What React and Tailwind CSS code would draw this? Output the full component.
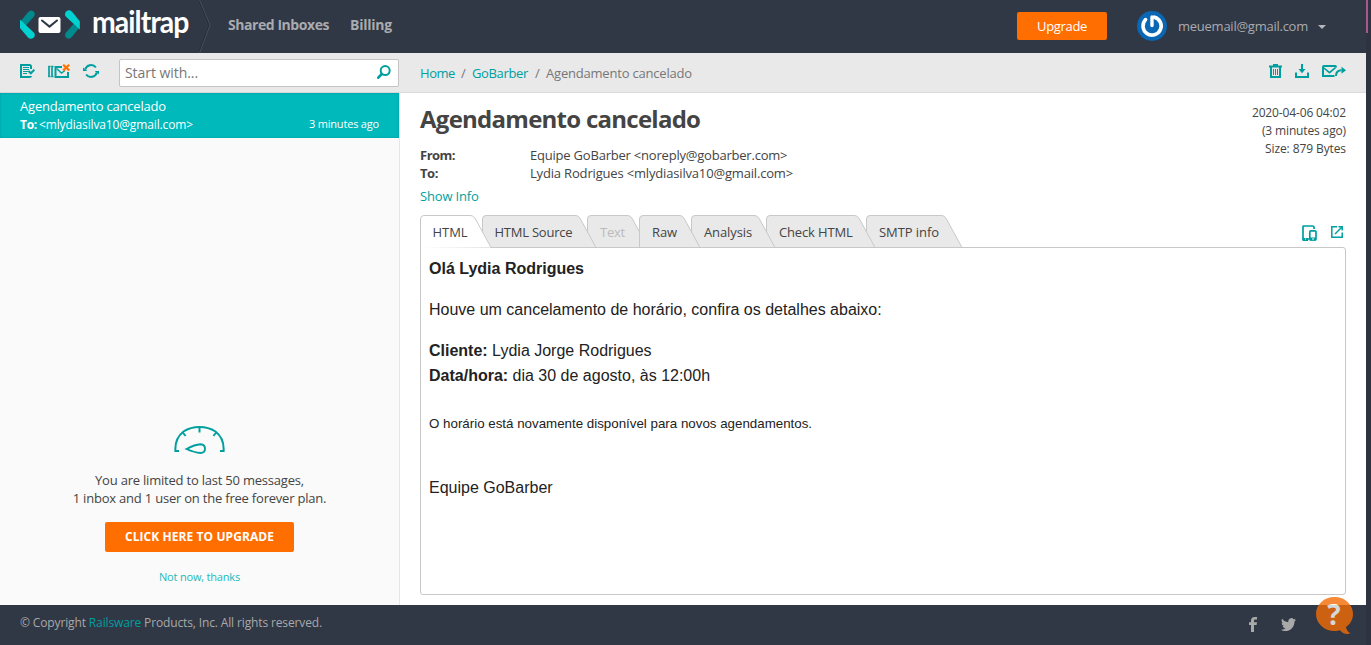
import React from "react";

/* ---------- logo ---------- */

function LogoMark() {
  const bracket = (
    <>
      <path d="M20.5 21.5 L28 12.2 Q30.2 9.6 33 11 Q36 13.200 34 16.500 L25.500 26 Z" fill="#008a8d" />
      <path d="M20 19.600 L33.800 32.500 Q36 35.200 33.600 37.800 Q30.800 40 28 37.600 L20 28 Z" fill="#00d2d2" />
    </>
  );
  return (
    <svg className="h-[53px] w-[92px] shrink-0" viewBox="0 0 92 53">
      <path d="M20.500 21.500 L28 12.200 Q30.200 9.600 33 11 Q36 13.200 34 16.500 L25.500 26 Z" fill="#008a8d" />
      <path d="M20 19.600 L33.800 32.500 Q36 35.200 33.600 37.800 Q30.800 40 28 37.600 L20 28 Z" fill="#00d2d2" />
      <g transform="rotate(180 49.900 24.600)">{bracket}</g>
      <rect x="38.500" y="17" width="22" height="16" rx="2" fill="#fff" />
      <path d="M42 20.500 L49.500 26.600 L57 20.500" fill="none" stroke="#303745" strokeWidth="2" strokeLinecap="round" strokeLinejoin="round" />
    </svg>
  );
}

function Gravatar() {
  return (
    <svg className="size-[30px]" viewBox="0 0 30 30">
      <circle cx="15" cy="15" r="15" fill="#0a67b3" />
      <path d="M15 6 V14.500" stroke="#fff" strokeWidth="3.400" strokeLinecap="round" />
      <path d="M17.500 6.200 A9.100 9.100 0 1 1 8.600 8.600" fill="none" stroke="#fff" strokeWidth="3.600" strokeLinecap="round" />
    </svg>
  );
}

/* ---------- toolbar icons ---------- */

function MarkReadIcon() {
  return (
    <svg className="h-[14px] w-[15px]" viewBox="0 0 15 14" fill="none" stroke="#009f9f">
      <path d="M11 5 V2.500 Q11 1 9.500 1 H1 V13 H9.500 Q11 13 11 12" strokeWidth="2" />
      <path d="M3 3.500 H9 M3 5.500 H9 M3 7.500 H8 M3 9.500 H7" strokeWidth="1" />
      <path d="M8.500 7 L10.800 9.300 L14.400 5.700" strokeWidth="2" />
    </svg>
  );
}

function ClearInboxIcon() {
  return (
    <svg className="h-[14px] w-[22px]" viewBox="0 0 22 14" fill="none">
      <g stroke="#009f9f">
        <path d="M2.500 2.500 H1 V12.500 H2.500 M5.500 2.500 H4 V12.500 H5.500" strokeWidth="1.700" />
        <path d="M14 3 H7.500 V13 H20 V8" strokeWidth="2" />
        <path d="M8.500 4.500 L13.500 9 L17 6.500" strokeWidth="1.400" />
      </g>
      <path d="M15.200 0.800 L21.200 6.400 M21.200 0.800 L15.200 6.400" stroke="#ff7200" strokeWidth="2.200" />
    </svg>
  );
}

function RefreshIcon() {
  return (
    <svg className="h-[14px] w-4" viewBox="0 0 16 14" fill="none">
      <path d="M2.200 5.500 A6 5.800 0 0 1 12.900 3.500 M13.800 8.500 A6 5.800 0 0 1 3.100 10.500" stroke="#009f9f" strokeWidth="2" />
      <path d="M0 3.400 V7 H4.400 Z M16 10.600 V7 H11.600 Z" fill="#009f9f" />
    </svg>
  );
}

function SearchIcon() {
  return (
    <svg className="h-[14px] w-[14px]" viewBox="0 0 14 14" fill="none" stroke="#009f9f">
      <circle cx="8.200" cy="5.600" r="4.500" strokeWidth="2" />
      <path d="M4.800 9 L1.300 12.700" strokeWidth="2.600" strokeLinecap="round" />
    </svg>
  );
}

function TrashIcon() {
  return (
    <svg className="h-[14px] w-[13px]" viewBox="0 0 13 14" fill="none" stroke="#009f9f">
      <path d="M0 2.500 H13" strokeWidth="2" />
      <path d="M4 1 H9" strokeWidth="2" />
      <path d="M2 3 V13 H11 V3" strokeWidth="2" />
      <path d="M4.500 5 V11 M6.500 5 V11 M8.500 5 V11" strokeWidth="1" />
    </svg>
  );
}

function DownloadIcon() {
  return (
    <svg className="h-[14px] w-[14px]" viewBox="0 0 14 14">
      <path d="M1 8.500 V13 H13 V8.500" fill="none" stroke="#009f9f" strokeWidth="2" />
      <path d="M6 0 H8 V5 H10.500 L7 9.200 L3.500 5 H6 Z" fill="#009f9f" />
    </svg>
  );
}

function ForwardIcon() {
  return (
    <svg className="h-[14px] w-6" viewBox="0 0 24 14" fill="none" stroke="#009f9f">
      <path d="M14 3.500 V3 Q14 2 13 2 H2 Q1 2 1 3 V12 H12.500" strokeWidth="2" />
      <path d="M2 4 L7.500 8.600 L13.500 3.600" strokeWidth="1.600" />
      <path d="M14 12 Q14 6.300 19.500 6.300" strokeWidth="2" />
      <path d="M19.500 2.800 L24 6.300 L19.500 9.800 Z" fill="#009f9f" stroke="none" />
    </svg>
  );
}

function DevicesIcon() {
  return (
    <svg className="h-4 w-[15px]" viewBox="0 0 15 16" fill="none" stroke="#009f9f">
      <path d="M7 14 H1 V1.500 Q1 1 1.500 1 H10.500 Q12 1 12 2 V4" strokeWidth="1.700" />
      <path d="M0.500 14.500 H6" strokeWidth="3" />
      <rect x="7.800" y="5.800" width="6.200" height="9.200" rx="1" strokeWidth="1.700" />
      <path d="M8 14 H14" strokeWidth="3" />
      <path d="M10 14 H12 M3 14 H4" stroke="#fff" strokeWidth="1" />
    </svg>
  );
}

function ExternalIcon() {
  return (
    <svg className="h-3 w-3" viewBox="0 0 12 12" fill="none" stroke="#009f9f" strokeWidth="1.500">
      <path d="M6 0.800 H0.800 V11.200 H11.200 V6.500" />
      <path d="M4 8 L11 1" />
      <path d="M7.500 0.800 H11.200 V4.500" />
    </svg>
  );
}

function GaugeIcon() {
  return (
    <svg className="h-[28px] w-[51px]" viewBox="0 0 51 28" fill="none" stroke="#009f9f" strokeWidth="2">
      <path d="M5 24.900 H1.400 Q0.600 12.500 9.500 5.500 Q16.500 1 25.500 1 Q34.500 1 41.500 5.500 Q50.400 12.500 49.600 24.900 H46" />
      <path d="M25.500 1 V6.500 M8.800 6.500 L11.600 10 M42.200 6.500 L39.400 10" />
      <path d="M12.500 23 Q21 18.600 26.500 18.300 Q31 18.600 31 22.800 Q31 27 26.500 27 Q20.500 26.600 12.500 23 Z" strokeWidth="1.900" />
    </svg>
  );
}

/* ---------- footer icons ---------- */

function FacebookIcon() {
  return (
    <svg className="h-[15px] w-2" viewBox="0 0 8 15" fill="#a9a9a9">
      <path d="M2 15 V8 H0 V5.300 H2 V3.600 C2 1.200 3.300 0 5.500 0 H8 V2.600 H6.300 C5.300 2.600 5 3 5 3.900 V5.300 H8 L7.600 8 H5 V15 Z" />
    </svg>
  );
}

function TwitterIcon() {
  return (
    <svg className="h-[13px] w-[15px]" viewBox="0 2 24 19.600" fill="#a9a9a9" preserveAspectRatio="none">
      <path d="M23.950 4.570a10 10 0 0 1-2.820.770 4.960 4.960 0 0 0 2.160-2.720c-.950.550-2 .960-3.130 1.180a4.920 4.920 0 0 0-8.380 4.480C7.690 8.090 4.070 6.130 1.640 3.160a4.820 4.820 0 0 0-.670 2.480c0 1.710.870 3.210 2.190 4.100a4.900 4.900 0 0 1-2.230-.620v.060a4.920 4.920 0 0 0 3.950 4.830 5 5 0 0 1-2.210.080 4.940 4.940 0 0 0 4.600 3.420A9.870 9.870 0 0 1 0 19.540a14 14 0 0 0 7.550 2.210c9.050 0 14-7.500 14-13.990 0-.210 0-.420-.020-.630a9.940 9.940 0 0 0 2.420-2.560z" />
    </svg>
  );
}

function HelpBubble() {
  return (
    <button className="absolute right-[17px] bottom-[10px] h-[38px] w-[38px] opacity-80" aria-label="Help">
      <svg className="absolute inset-0 size-full" viewBox="0 0 38 38">
        <path d="M18.500 0 C28.700 0 37 7.500 37 17 C37 22.500 34.500 26.800 30 30 C30.500 33 32 35 34.500 36.300 C30.500 38.200 26.500 36.500 24 33.300 C22.500 33.700 20.500 34 18.500 34 C8.300 34 0 26.500 0 17 C0 7.500 8.300 0 18.500 0 Z" fill="#f46c05" />
      </svg>
      <span className="relative -top-[2px] block pr-[2px] text-center font-['Open_Sans',sans-serif] text-[28px] leading-[36px] font-bold text-white">?</span>
    </button>
  );
}

/* ---------- sections ---------- */

function Header() {
  return (
    <header className="flex h-[53px] items-center bg-[#303745] text-[#a9abaf]">
      <LogoMark />
      <div className="h-[53px] w-[96px]">
        <span className="-mt-[7px] block w-[105px] origin-left scale-x-[0.915] font-['Lato','Open_Sans',sans-serif] text-[31px] leading-[57px] font-bold tracking-[-1px] whitespace-nowrap text-white">
          mailtrap
        </span>
      </div>
      <svg className="ml-[11px] h-[53px] w-3" viewBox="0 0 12 53" fill="none">
        <path d="M0.500 0 L11 25 L0.500 53" stroke="#4b515e" />
        <path d="M-0.500 0 L10 25 L-0.500 53" stroke="#292f3b" />
      </svg>
      <nav className="-mt-[3px] ml-[17px] flex gap-[21px] text-[14px] leading-[20px] font-bold">
        <a className="w-[101px] tracking-[-0.44px] whitespace-nowrap">Shared Inboxes</a>
        <a className="tracking-[-0.23px]">Billing</a>
      </nav>
      <div className="-mt-[2px] mr-10 ml-auto flex items-center">
        <button className="h-7 w-[90px] rounded-[2px] bg-[#ff6e00] text-[13px] leading-[28px] font-medium tracking-[-0.33px] text-white">
          Upgrade
        </button>
        <span className="ml-[30px]">
          <Gravatar />
        </span>
        <span className="ml-[11px] w-[130px] text-[13px] leading-[20px] tracking-[-0.25px] whitespace-nowrap">meuemail@gmail.com</span>
        <svg className="mt-[2px] ml-[10px] h-1 w-2" viewBox="0 0 8 4">
          <path d="M0 0 H8 L4 4 Z" fill="#b5b7ba" />
        </svg>
      </div>
    </header>
  );
}

function Sidebar() {
  return (
    <aside className="flex w-[400px] shrink-0 flex-col">
      <div className="flex h-10 items-start border-b border-[#d9d9d9] bg-[#e9e9e9] pt-[6px] pl-5">
        <div className="mt-[5px] flex gap-[13px]">
          <MarkReadIcon />
          <ClearInboxIcon />
          <RefreshIcon />
        </div>
        <div className="ml-5 flex h-7 w-[280px] justify-between rounded-[2px] border border-[#c4c4c4] bg-white pr-[7px] pl-[5px]">
          <span className="text-[14px] leading-[26px] tracking-[-0.06px] text-[#777]">Start with...</span>
          <span className="mt-[5px]">
            <SearchIcon />
          </span>
        </div>
      </div>
      <div className="flex flex-1 flex-col border-r border-[#e6e6e6] bg-[#fafafa]">
        <div className="h-[45px] bg-[#00b9bb] pt-[4px] pr-5 pl-5 leading-[18px] text-white shadow-[inset_0_0_2px_#008f92]">
          <div className="text-[13px] tracking-[-0.2px]">Agendamento cancelado</div>
          <div className="mt-[1px] flex justify-between text-[12px]">
            <span className="flex gap-[2px]">
              <b className="tracking-[-0.27px]">To:</b>
              <span className="tracking-[-0.14px]">&lt;mlydiasilva10@gmail.com&gt;</span>
            </span>
            <span className="-mt-[1px] text-[11px] tracking-[-0.19px]">3 minutes ago</span>
          </div>
        </div>
        <div className="mt-auto flex flex-col items-center pb-[19px] text-center text-[13px] leading-[18px]">
          <GaugeIcon />
          <p className="mt-[17px] tracking-[-0.21px]">
            You are limited to last 50 messages,
            <br />
            1 inbox and 1 user on the free forever plan.
          </p>
          <button className="mt-[15px] h-[30px] w-[189px] rounded-[2px] bg-[#ff6e00] text-[12px] leading-[30px] font-bold tracking-[0.07px] text-white">
            CLICK HERE TO UPGRADE
          </button>
          <a className="mt-4 text-[11px] tracking-[-0.19px] text-[#1ab9bb]">Not now, thanks</a>
        </div>
      </div>
    </aside>
  );
}

function Tab({ label, width, className, track, active }) {
  const w = width;
  const fill = active ? "#fff" : "#e9e9e9";
  const outline = `M0.500 33 V4 Q0.500 0.500 4 0.500 H${w - 21} C${w - 17.500} 0.500 ${w - 16.500} 2.500 ${w - 15} 5 L${w} 32.500`;
  return (
    <div className={"relative -mr-[9px] h-8 shrink-0 " + className}>
      <svg className="absolute top-0 left-0" width={w} height={active ? 33 : 32} viewBox={`0 0 ${w} ${active ? 33 : 32}`}>
        <path d={outline} fill={fill} stroke="#c8c8c8" />
      </svg>
      <span className={"relative block whitespace-nowrap " + track}>{label}</span>
    </div>
  );
}

function Tabs() {
  return (
    <div className="relative z-10 flex text-[13px] leading-[34px]">
      <Tab label="HTML" width={71} className="z-[7] w-[71px]" track="pl-[12.6px] tracking-[-0.1px]" active />
      <Tab label="HTML Source" width={114} className="z-[6] w-[114px]" track="pl-[12.4px] tracking-[-0.22px]" />
      <Tab label="Text" width={61} className="z-[1] w-[61px] text-[#bbb]" track="pl-[13px] tracking-[-0.23px]" />
      <Tab label="Raw" width={61} className="z-[5] w-[61px]" track="pl-[13px] tracking-[-0.11px]" />
      <Tab label="Analysis" width={84} className="z-[4] w-[84px]" track="pl-[13px] tracking-[-0.11px]" />
      <Tab label="Check HTML" width={109} className="z-[3] w-[109px]" track="pl-[13px] tracking-[-0.15px]" />
      <Tab label="SMTP info" width={96} className="z-[2] w-[96px]" track="pl-[13px] tracking-[-0.07px]" />
      <div className="mt-[10px] ml-auto flex items-start gap-[14px] pr-[3px]">
        <DevicesIcon />
        <span className="mt-[1px]">
          <ExternalIcon />
        </span>
      </div>
    </div>
  );
}

function MailBody() {
  return (
    <div className="h-[348px] rounded-b-[3px] rounded-tr-[3px] border border-[#c8c8c8] pt-[8px] pl-2 font-['Liberation_Sans',Arial,sans-serif] text-[16px] leading-[25px] text-[#222]">
      <p className="font-bold">Olá Lydia Rodrigues</p>
      <p className="mt-4">Houve um cancelamento de horário, confira os detalhes abaixo:</p>
      <p className="mt-4">
        <b>Cliente:</b> Lydia Jorge Rodrigues
        <br />
        <b>Data/hora:</b> dia 30 de agosto, às 12:00h
      </p>
      <p className="mt-[23px] text-[13.333px]">O horário está novamente disponível para novos agendamentos.</p>
      <p className="mt-[39px]">Equipe GoBarber</p>
    </div>
  );
}

function Message() {
  return (
    <main className="flex min-w-0 flex-1 flex-col bg-white">
      <div className="flex h-10 justify-between border-b border-[#d9d9d9] bg-[#e9e9e9] pr-5 pl-5 text-[13px] leading-[40px] text-[#777]">
        <div className="flex">
          <a className="w-[35px] tracking-[-0.44px] text-[#009f9f]">Home</a>
          <span className="w-[17px] text-center">/</span>
          <a className="w-[57px] tracking-[-0.35px] text-[#009f9f]">GoBarber</a>
          <span className="w-[17px] text-center">/</span>
          <span className="tracking-[-0.2px]">Agendamento cancelado</span>
        </div>
        <div className="flex gap-[13px] pt-[11px]">
          <TrashIcon />
          <DownloadIcon />
          <ForwardIcon />
        </div>
      </div>
      <div className="px-5 text-[13px] leading-[18px]">
        <div className="flex h-[53px] justify-between pt-2">
          <h1 className="text-[24px] leading-[36px] font-bold tracking-[-0.74px]">Agendamento cancelado</h1>
          <div className="pt-[3px] text-right text-[12px] leading-[18px] tracking-[-0.14px]">
            <div>2020-04-06 04:02</div>
            <div>(3 minutes ago)</div>
            <div className="tracking-[-0.1px]">Size: 879 Bytes</div>
          </div>
        </div>
        <dl className="grid grid-cols-[110px_1fr]">
          <dt className="font-bold tracking-[-0.5px]">From:</dt>
          <dd className="tracking-[-0.21px]">Equipe GoBarber &lt;noreply@gobarber.com&gt;</dd>
          <dt className="font-bold tracking-[-0.43px]">To:</dt>
          <dd className="tracking-[-0.17px]">Lydia Rodrigues &lt;mlydiasilva10@gmail.com&gt;</dd>
        </dl>
        <a className="mt-[5px] mb-[10px] block tracking-[-0.18px] text-[#009f9f]">Show Info</a>
        <Tabs />
        <MailBody />
      </div>
    </main>
  );
}

function Footer() {
  return (
    <footer className="flex h-10 items-start justify-between bg-[#303745] pl-5 text-[12px] text-[#a9a9a9]">
      <p className="leading-[35px] tracking-[-0.135px]">
        © Copyright <a className="text-[#009f9f]">Railsware</a> Products, Inc. All rights reserved.
      </p>
      <div className="mt-3 mr-[70px] flex gap-6">
        <FacebookIcon />
        <span className="mt-[1px]">
          <TwitterIcon />
        </span>
      </div>
    </footer>
  );
}

export default function App() {
  return (
    <div className="relative flex h-[645px] w-[1371px] overflow-hidden bg-[#2e3241] font-['Open_Sans','Noto_Sans',sans-serif] text-[#444]">
      <div className="flex w-[1366px] flex-col">
        <Header />
        <div className="flex flex-1">
          <Sidebar />
          <Message />
        </div>
        <Footer />
      </div>
      <div className="h-[33px] w-[2px] bg-[#a8588f]" />
      <HelpBubble />
    </div>
  );
}
